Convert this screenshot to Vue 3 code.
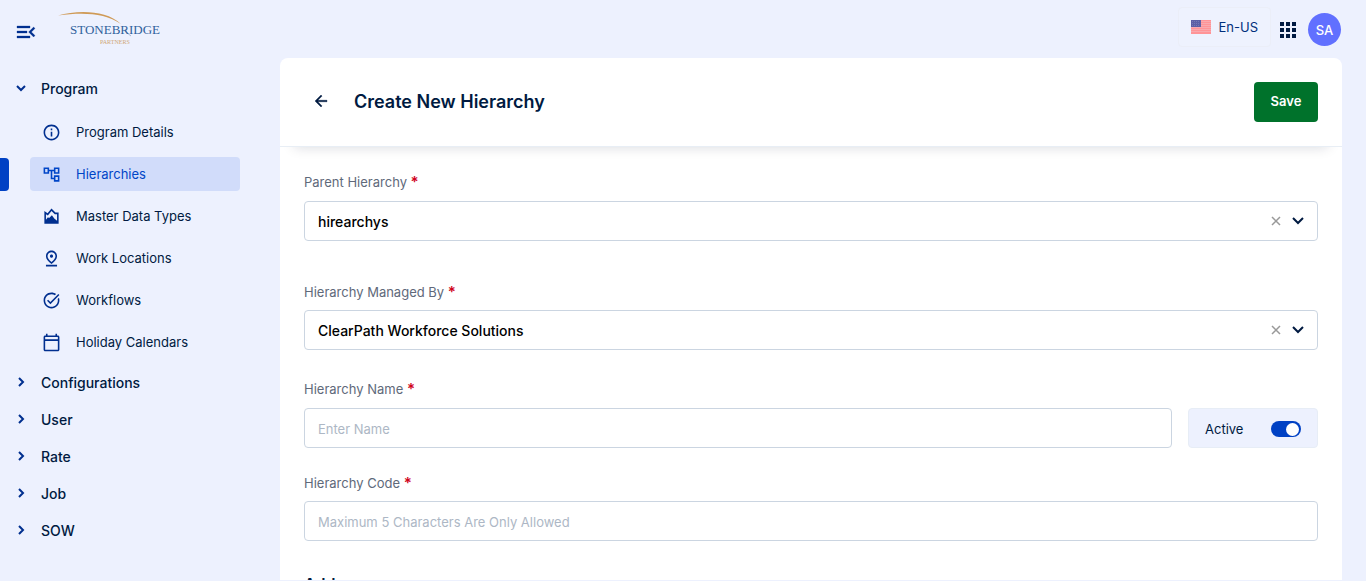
<script setup>
import { ref } from 'vue'

const items = [
  { label: 'Program Details', icon: 'info' },
  { label: 'Hierarchies', icon: 'tree', active: true },
  { label: 'Master Data Types', icon: 'chart' },
  { label: 'Work Locations', icon: 'pin' },
  { label: 'Workflows', icon: 'task' },
  { label: 'Holiday Calendars', icon: 'calendar' }
]

const icons = {
  info: 'M11 7h2v2h-2zm0 4h2v6h-2zm1-9C6.48 2 2 6.48 2 12s4.48 10 10 10 10-4.48 10-10S17.52 2 12 2zm0 18c-4.41 0-8-3.59-8-8s3.59-8 8-8 8 3.59 8 8-3.59 8-8 8z',
  tree: 'M22 11V3h-7v3H9V3H2v8h7V8h2v10h4v3h7v-8h-7v3h-2V8h2v3h7zM7 9H4V5h3v4zm10 6h3v4h-3v-4zm0-10h3v4h-3V5z',
  chart: 'M17 7l-5-5-5 6-4-3v16h18V7h-4zm2 10.5l-3.5-3-3-4-3.500 3.500-1.500-1L5 16V9l2.400 1.800L12 5.200 16.200 9H19v8.500z',
  pin: 'M12 4c1.930 0 5 1.400 5 5.150 0 2.160-1.720 4.670-5 7.320-3.280-2.650-5-5.170-5-7.320C7 5.400 10.070 4 12 4m0-2C8.730 2 5 4.460 5 9.150c0 3.120 2.330 6.410 7 9.850 4.670-3.440 7-6.730 7-9.850C19 4.460 15.270 2 12 2zm0 5c-1.100 0-2 .9-2 2s.9 2 2 2 2-.9 2-2-.9-2-2-2zM5 20h14v2H5v-2z',
  task: 'M22 5.180L10.590 16.600l-4.240-4.240 1.410-1.410 2.830 2.830 10-10L22 5.180zM19.790 10.220c.13.57.21 1.170.21 1.780 0 4.420-3.580 8-8 8s-8-3.580-8-8 3.580-8 8-8c1.580 0 3.040.46 4.280 1.250l1.440-1.440C16.100 2.670 14.130 2 12 2 6.480 2 2 6.480 2 12s4.480 10 10 10 10-4.480 10-10c0-1.190-.22-2.330-.6-3.390l-1.610 1.610z',
  calendar: 'M20 3h-1V1h-2v2H7V1H5v2H4c-1.100 0-2 .9-2 2v16c0 1.100.9 2 2 2h16c1.100 0 2-.9 2-2V5c0-1.100-.9-2-2-2zm0 18H4V10h16v11zm0-13H4V5h16v3z'
}

const groups = ['Configurations', 'User', 'Rate', 'Job', 'SOW']
const parent = ref('hirearchys')
const managedBy = ref('ClearPath Workforce Solutions')
const name = ref('')
const code = ref('')
const active = ref(true)
</script>

<template>
  <div class="app">
    <header class="topbar">
      <button class="plain menu" type="button" aria-label="Collapse menu">
        <svg width="24" height="24" viewBox="0 0 24 24"><path d="M3 18h13v-2H3v2zM3 6v2h13V6H3zm0 7h10v-2H3v2zm18 2.600L17.400 12 21 8.400 19.600 7l-5 5 5 5 1.400-1.400z" fill="currentColor" stroke="currentColor" stroke-width=".3" /></svg>
      </button>
      <a class="logo" href="#" aria-label="Stonebridge Partners">
        <svg width="106" height="38" viewBox="0 0 106 38">
          <path d="M0 6.500C20 1 48 1 63 15 47 4 25 3 0 6.500z" fill="#cf9a56" />
          <path d="M67 20q2 5 6 7" fill="none" stroke="#8fa9cc" stroke-width=".8" />
          <text class="brand" x="12" y="25">STONEBRIDGE</text>
          <text class="partners" x="42" y="35">PARTNERS</text>
        </svg>
      </a>
      <div class="tools">
        <button class="lang" type="button">
          <svg width="20" height="14" viewBox="0 0 20 14">
            <path fill="#ff9497" d="M0 0h20v14H0z" />
            <path stroke="#f9a9ae" d="M0 1.500h20M0 3.500h20M0 5.500h20M0 7.500h20M0 9.500h20M0 11.500h20" stroke-width="1" />
            <path fill="#5c60a6" d="M0 0h10v7H0z" />
            <path stroke="#8083ba" stroke-width=".7" stroke-dasharray="1 1" d="M1 1.500h8M1 3.500h8M1 5.500h8" />
          </svg>
          <span>En-US</span>
        </button>
        <button class="plain apps" type="button" aria-label="Applications">
          <svg width="24" height="24" viewBox="0 0 24 24"><path fill="currentColor" d="M4 4h4v4H4zM10 4h4v4h-4zM16 4h4v4h-4zM4 10h4v4H4zM10 10h4v4h-4zM16 10h4v4h-4zM4 16h4v4H4zM10 16h4v4h-4zM16 16h4v4h-4z" /></svg>
        </button>
        <button class="avatar" type="button">SA</button>
      </div>
    </header>

    <div class="body">
      <nav class="sidebar">
        <button class="group" type="button" aria-expanded="true">
          <svg width="16" height="16" viewBox="0 0 16 16"><path d="M4 5l4 4 4-4" /></svg>
          <span>Program</span>
        </button>
        <ul class="items">
          <li v-for="item in items" :key="item.label" :class="{ current: item.active }">
            <a href="#" class="item">
              <svg width="19" height="19" viewBox="0 0 24 24"><path :d="icons[item.icon]" fill="currentColor" /></svg>
              <span>{{ item.label }}</span>
            </a>
          </li>
        </ul>
        <button v-for="group in groups" :key="group" class="group" type="button" aria-expanded="false">
          <svg width="16" height="16" viewBox="0 0 16 16"><path d="M6 3l4 4-4 4" /></svg>
          <span>{{ group }}</span>
        </button>
      </nav>

      <main class="card">
        <div class="card-head">
          <button class="plain back" type="button" aria-label="Back">
            <svg width="18" height="18" viewBox="0 0 24 24"><path d="M20 11H7.830l5.590-5.590L12 4l-8 8 8 8 1.410-1.410L7.830 13H20v-2z" fill="currentColor" stroke="currentColor" stroke-width=".5" /></svg>
          </button>
          <h1>Create New Hierarchy</h1>
          <button class="save" type="button">Save</button>
        </div>

        <form class="form" @submit.prevent>
          <div class="field parent">
            <label for="parent">Parent Hierarchy <b>*</b></label>
            <div class="control">
              <select id="parent" v-model="parent"><option>hirearchys</option></select>
              <button class="plain clear" type="button" aria-label="Clear parent hierarchy">
                <svg width="10" height="10" viewBox="0 0 10 10"><path d="M1 1l8 8M9 1l-8 8" /></svg>
              </button>
              <svg class="caret" width="12" height="8" viewBox="0 0 12 8"><path d="M1 1l5 5 5-5" /></svg>
            </div>
          </div>
          <div class="field managed">
            <label for="managed">Hierarchy Managed By <b>*</b></label>
            <div class="control">
              <select id="managed" v-model="managedBy"><option>ClearPath Workforce Solutions</option></select>
              <button class="plain clear" type="button" aria-label="Clear managed by">
                <svg width="10" height="10" viewBox="0 0 10 10"><path d="M1 1l8 8M9 1l-8 8" /></svg>
              </button>
              <svg class="caret" width="12" height="8" viewBox="0 0 12 8"><path d="M1 1l5 5 5-5" /></svg>
            </div>
          </div>
          <div class="name-row">
            <div class="field name">
              <label for="name">Hierarchy Name <b>*</b></label>
              <input id="name" v-model="name" class="control" type="text" placeholder="Enter Name" />
            </div>
            <label class="toggle">
              <span>Active</span>
              <input v-model="active" type="checkbox" role="switch" />
            </label>
          </div>
          <div class="field">
            <label for="code">Hierarchy Code <b>*</b></label>
            <input id="code" v-model="code" class="control" type="text" maxlength="5" placeholder="Maximum 5 Characters Are Only Allowed" />
          </div>
          <h2>Address</h2>
        </form>
      </main>
    </div>
  </div>
</template>

<style>
body {
  background: #edf1fe;
}
</style>

<style scoped>
* {
  box-sizing: border-box;
}
.app {
  display: flex;
  flex-direction: column;
  height: 100vh;
  overflow: hidden;
  background: #edf1fe;
  color: #001a41;
  font-family: Inter, "Liberation Sans", sans-serif;
  font-size: 13px;
}
button,
input,
select {
  font: inherit;
  color: inherit;
}
button {
  padding: 0;
  cursor: pointer;
}
svg {
  display: block;
  flex: none;
}
.plain {
  border: 0;
  background: none;
}
.topbar {
  display: flex;
  align-items: flex-start;
  height: 58px;
  flex: none;
  padding: 0 25px 0 14px;
}
.menu {
  margin-top: 20px;
  color: #002f8f;
}
.logo {
  margin: 9px 0 0 20px;
}
.brand {
  font: 13px "Liberation Serif", serif;
  fill: #30619c;
}
.partners {
  font: 6px "Liberation Serif", serif;
  fill: #d0a777;
}
.tools {
  display: flex;
  align-items: flex-start;
  margin-left: auto;
}
.lang {
  display: flex;
  align-items: center;
  gap: 8px;
  height: 40px;
  margin-top: 7px;
  padding: 0 12px;
  border: 1px solid #ebeef8;
  border-radius: 4px;
  background: #eef2fe;
  color: #002f7c;
}
.apps {
  margin: 18px 8px 0 5px;
  color: #001a41;
}
.avatar {
  width: 33px;
  height: 33px;
  margin-top: 13px;
  border: 0;
  border-radius: 50%;
  background: #6170ff;
  color: #fff;
  font-weight: 500;
}
.body {
  display: flex;
  flex: 1;
  min-height: 0;
}
.sidebar {
  width: 280px;
  flex: none;
  padding-top: 12px;
}
.group {
  display: flex;
  align-items: center;
  gap: 12px;
  width: 100%;
  height: 37px;
  padding-left: 13px;
  border: 0;
  background: none;
  font-size: 14px;
  font-weight: 500;
}
.group path {
  fill: none;
  stroke: #002f8f;
  stroke-width: 2;
}
.items {
  display: flex;
  flex-direction: column;
  gap: 8px;
  margin: 8px 40px 5px 0;
  padding: 0;
  list-style: none;
}
.items li {
  position: relative;
  padding-left: 30px;
}
.item {
  display: flex;
  align-items: center;
  gap: 15px;
  height: 34px;
  padding-left: 12px;
  border-radius: 4px;
  color: #001a41;
  text-decoration: none;
}
.item svg {
  color: #002f8f;
}
.current .item {
  background: #d1dcfa;
  color: #0045c7;
}
.current .item svg {
  color: #0045c7;
}
.current::before {
  content: "";
  position: absolute;
  left: 0;
  top: 1px;
  bottom: 0;
  width: 9px;
  border-radius: 0 4px 4px 0;
  background: #0041c4;
}
.card {
  flex: 1;
  min-width: 0;
  margin: 0 24px 1px 0;
  overflow: hidden;
  border-radius: 8px 8px 0 0;
  background: #fff;
}
.card-head {
  display: flex;
  align-items: center;
  height: 89px;
  padding: 0 24px 0 32px;
  border-bottom: 1px solid #e8eef5;
  box-shadow: 0 14px 12px -14px rgba(0, 20, 50, 0.16);
}
.back,
h1 {
  padding-bottom: 2px;
}
h1 {
  margin: 0 auto 0 24px;
  font-size: 18px;
  font-weight: 600;
}
.save {
  width: 64px;
  height: 40px;
  padding-bottom: 2px;
  border: 0;
  border-radius: 4px;
  background: #00722b;
  color: #fff;
  font-weight: 600;
}
.form {
  padding: 25px 24px 0;
}
.field {
  display: flex;
  flex-direction: column;
  gap: 8px;
}
.field label {
  height: 20px;
  line-height: 20px;
  color: #60697a;
}
.field b {
  color: #d0021b;
  font-size: 15px;
  font-weight: 600;
  line-height: 16px;
}
.control {
  display: flex;
  align-items: center;
  width: 100%;
  height: 40px;
  border: 1px solid #cbd5e1;
  border-radius: 4px;
  background: #fff;
}
input.control {
  padding: 1px 13px 0;
}
input::placeholder {
  color: #adb7c5;
  opacity: 1;
}
select {
  flex: 1;
  min-width: 0;
  height: 38px;
  padding: 0 13px;
  border: 0;
  border-radius: 4px;
  appearance: none;
  background: none;
  color: #000;
  font-size: 14px;
  font-weight: 500;
}
.clear path {
  stroke: #999;
  stroke-width: 1.5;
}
.caret {
  margin: 0 13px 0 11px;
}
.caret path {
  fill: none;
  stroke: #001a41;
  stroke-width: 2;
}
.parent,
.name {
  gap: 9px;
}
.parent {
  margin-bottom: 41px;
}
.managed {
  margin-bottom: 29px;
}
.name-row {
  display: flex;
  align-items: flex-end;
  gap: 16px;
  margin-bottom: 25px;
}
.name {
  flex: 1;
}
.toggle {
  display: flex;
  align-items: center;
  justify-content: space-between;
  width: 130px;
  height: 40px;
  padding: 2px 16px 0;
  border: 1px solid #e7edf6;
  border-radius: 4px;
  background: #edf1fe;
}
.toggle input {
  display: flex;
  align-items: center;
  justify-content: flex-end;
  width: 30px;
  height: 16px;
  margin: 0;
  padding: 0 2px;
  border-radius: 8px;
  appearance: none;
  background: #0041c4;
}
.toggle input::before {
  content: "";
  width: 13px;
  height: 13px;
  border-radius: 50%;
  background: #fff;
}
.toggle input:not(:checked) {
  justify-content: flex-start;
  background: #94a3b8;
}
h2 {
  margin: 31px 0 24px;
  font-size: 16px;
  font-weight: 600;
  line-height: 24px;
}
</style>
